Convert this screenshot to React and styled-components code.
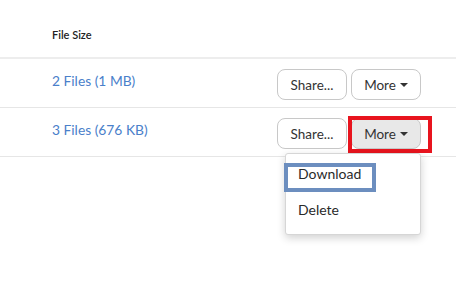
import React from "react";
import styled, { createGlobalStyle } from "styled-components";

const Global = createGlobalStyle`
  html, body { margin: 0; padding: 0; background: #fff; }
  body { font-family: Lato, "Open Sans", Arial, sans-serif; width: 456px; height: 291px; overflow: hidden; }
  * { box-sizing: border-box; }
`;

const Table = styled.div`
  display: flex;
  flex-direction: column;
  width: 456px;
`;

const HeaderRow = styled.div`
  height: 59px;
  padding: 28px 0 0 52px;
  border-bottom: 2px solid #ededed;
  font-size: 11px;
  font-weight: 600;
  color: #222;
  line-height: 13px;
`;

const Row = styled.div`
  height: 49px;
  display: flex;
  justify-content: space-between;
  align-items: flex-start;
  padding: 0 35px 0 52px;
  border-bottom: 1px solid #e6e6e6;
`;

const SizeLink = styled.a`
  margin-top: 14px;
  font-size: 13.8px;
  line-height: 16px;
  color: #4a80ca;
  text-decoration: none;
`;

const Actions = styled.div`
  margin-top: 10px;
  display: flex;
  gap: 4px;
`;

const Button = styled.button`
  position: relative;
  width: 70px;
  height: 31px;
  border: 1px solid #c8c8c8;
  border-radius: 8px;
  background: ${(p) => (p.$active ? "#e8e8e8" : "#fff")};
  font-family: Lato, Arial, sans-serif;
  font-size: 13.5px;
  color: #333;
  display: flex;
  align-items: center;
  justify-content: center;
  gap: 4px;
  padding: 0;
`;

const Caret = styled.span`
  width: 0;
  height: 0;
  border-left: 4px solid transparent;
  border-right: 4px solid transparent;
  border-top: 4px solid #333;
  margin-top: 1px;
`;

const MoreWrap = styled.div`
  position: relative;
`;

const RedMark = styled.div`
  position: absolute;
  left: -3px;
  top: -2px;
  width: 84px;
  height: 37px;
  border: 4px solid #e8141e;
  pointer-events: none;
`;

const Menu = styled.div`
  position: absolute;
  right: 0;
  top: 35px;
  width: 136px;
  padding: 2px 0 6px;
  background: #fff;
  border: 1px solid #d6d6d6;
  border-radius: 3px;
  box-shadow: 0 3px 8px rgba(0, 0, 0, 0.18);
  z-index: 2;
`;

const MenuItem = styled.div`
  position: relative;
  height: 36px;
  line-height: 36px;
  padding-left: 12px;
  font-size: 14px;
  color: #2a2a2a;
`;

const BlueMark = styled.div`
  position: absolute;
  left: -2px;
  top: 7px;
  width: 92px;
  height: 29px;
  border: 4.5px solid #6c8ebf;
  pointer-events: none;
`;

export default function App() {
  return (
    <>
      <Global />
      <Table>
        <HeaderRow>File Size</HeaderRow>
        <Row>
          <SizeLink href="#">2 Files (1 MB)</SizeLink>
          <Actions>
            <Button>Share...</Button>
            <Button>
              More <Caret />
            </Button>
          </Actions>
        </Row>
        <Row>
          <SizeLink href="#">3 Files (676 KB)</SizeLink>
          <Actions>
            <Button>Share...</Button>
            <MoreWrap>
              <Button $active>
                More <Caret />
              </Button>
              <RedMark />
              <Menu>
                <MenuItem>
                  Download
                  <BlueMark />
                </MenuItem>
                <MenuItem>Delete</MenuItem>
              </Menu>
            </MoreWrap>
          </Actions>
        </Row>
      </Table>
    </>
  );
}
